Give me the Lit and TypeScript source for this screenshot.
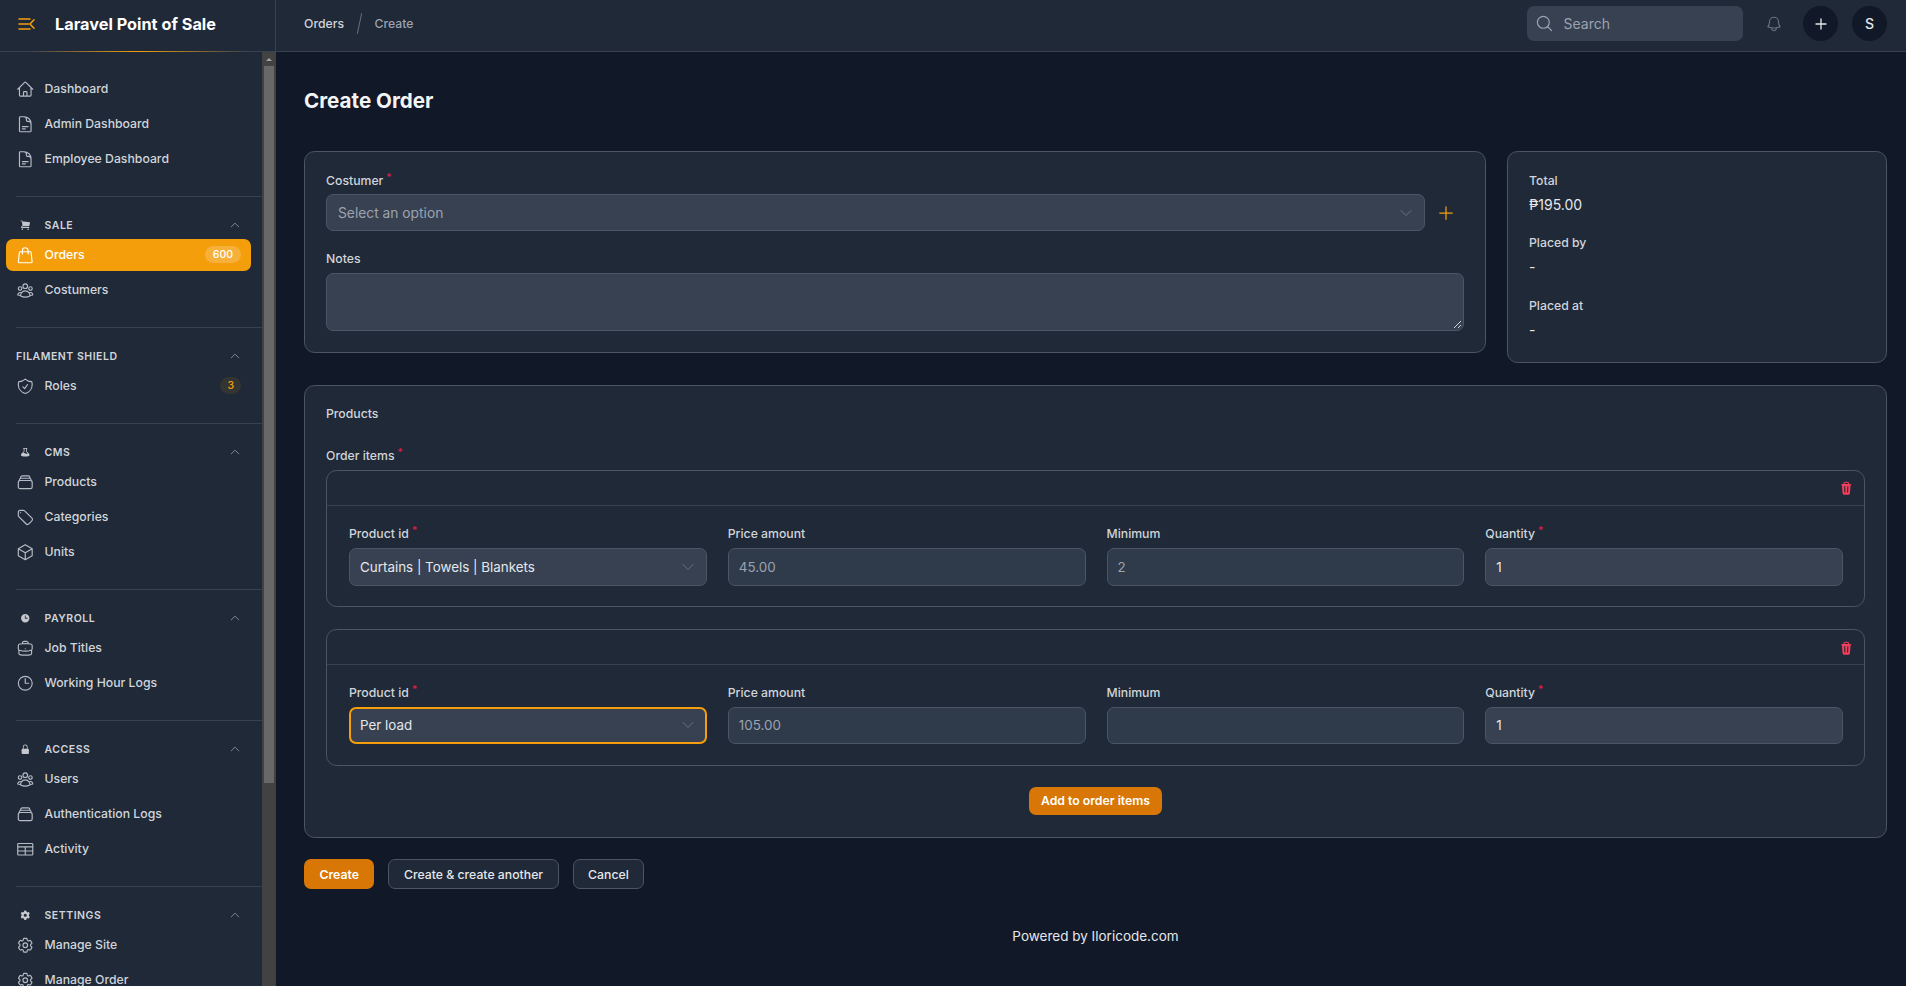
import { LitElement, html, css, svg } from "lit";
import { customElement } from "lit/decorators.js";

const O: Record<string, string> = {
  home: "m2.25 12 8.954-8.955c.44-.439 1.152-.439 1.591 0L21.75 12M4.5 9.75v10.125c0 .621.504 1.125 1.125 1.125H9.75v-4.875c0-.621.504-1.125 1.125-1.125h2.25c.621 0 1.125.504 1.125 1.125V21h4.125c.621 0 1.125-.504 1.125-1.125V9.75M8.25 21h8.25",
  doc: "M19.5 14.25v-2.625a3.375 3.375 0 0 0-3.375-3.375h-1.5A1.125 1.125 0 0 1 13.5 7.125v-1.5a3.375 3.375 0 0 0-3.375-3.375H8.25m0 12.75h7.5m-7.5 3H12M10.5 2.25H5.625c-.621 0-1.125.504-1.125 1.125v17.25c0 .621.504 1.125 1.125 1.125h12.75c.621 0 1.125-.504 1.125-1.125V11.25a9 9 0 0 0-9-9Z",
  bag: "M15.75 10.5V6a3.75 3.75 0 1 0-7.5 0v4.5m11.356-1.993 1.263 12c.07.665-.45 1.243-1.119 1.243H4.25a1.125 1.125 0 0 1-1.12-1.243l1.264-12A1.125 1.125 0 0 1 5.513 7.5h12.974c.576 0 1.059.435 1.119 1.007Z",
  group: "M18 18.72a9.094 9.094 0 0 0 3.741-.479 3 3 0 0 0-4.682-2.72m.94 3.198.001.031c0 .225-.012.447-.037.666A11.944 11.944 0 0 1 12 21c-2.17 0-4.207-.576-5.963-1.584A6.062 6.062 0 0 1 6 18.719m12 0a5.971 5.971 0 0 0-.941-3.197m0 0A5.995 5.995 0 0 0 12 12.75a5.995 5.995 0 0 0-5.058 2.772m0 0a3 3 0 0 0-4.681 2.72 8.986 8.986 0 0 0 3.74.477m.94-3.197a5.971 5.971 0 0 0-.94 3.197M15 6.75a3 3 0 1 1-6 0 3 3 0 0 1 6 0Zm6 3a2.25 2.25 0 1 1-4.5 0 2.25 2.25 0 0 1 4.5 0Zm-13.5 0a2.25 2.25 0 1 1-4.5 0 2.25 2.25 0 0 1 4.5 0Z",
  shield: "M9 12.75 11.25 15 15 9.75m-3-7.036A11.959 11.959 0 0 1 3.598 6 11.99 11.99 0 0 0 3 9.749c0 5.592 3.824 10.29 9 11.623 5.176-1.332 9-6.03 9-11.622 0-1.31-.21-2.571-.598-3.751h-.152c-3.196 0-6.1-1.248-8.25-3.285Z",
  stack: "M6 6.878V6a2.25 2.25 0 0 1 2.25-2.25h7.5A2.25 2.25 0 0 1 18 6v.878m-12 0c.235-.083.487-.128.75-.128h10.5c.263 0 .515.045.75.128m-12 0A2.25 2.25 0 0 0 4.5 9v.878m13.5-3A2.25 2.25 0 0 1 19.5 9v.878m0 0a2.246 2.246 0 0 0-.75-.128H5.25c-.263 0-.515.045-.75.128m15 0A2.25 2.25 0 0 1 21 12v6a2.25 2.25 0 0 1-2.25 2.25H5.25A2.25 2.25 0 0 1 3 18v-6c0-.98.626-1.813 1.5-2.122",
  tag: "M9.568 3H5.25A2.25 2.25 0 0 0 3 5.25v4.318c0 .597.237 1.17.659 1.591l9.581 9.581c.699.699 1.78.872 2.607.33a18.095 18.095 0 0 0 5.223-5.223c.542-.827.369-1.908-.33-2.607L11.16 3.66A2.25 2.25 0 0 0 9.568 3Z M6 6h.008v.008H6V6Z",
  cube: "m21 7.5-9-5.25L3 7.5m18 0-9 5.25m9-5.25v9l-9 5.25M3 7.5l9 5.25M3 7.5v9l9 5.25m0-9v9",
  brief: "M20.25 14.15v4.25c0 1.094-.787 2.036-1.872 2.18-2.087.277-4.216.42-6.378.42s-4.291-.143-6.378-.42c-1.085-.144-1.872-1.086-1.872-2.18v-4.25m16.5 0a2.18 2.18 0 0 0 .75-1.661V8.706c0-1.081-.768-2.015-1.837-2.175a48.114 48.114 0 0 0-3.413-.387m4.5 8.006c-.194.165-.42.295-.673.38A23.978 23.978 0 0 1 12 15.75c-2.648 0-5.195-.429-7.577-1.22a2.016 2.016 0 0 1-.673-.38m0 0A2.18 2.18 0 0 1 3 12.489V8.706c0-1.081.768-2.015 1.837-2.175a48.111 48.111 0 0 1 3.413-.387m7.5 0V5.25A2.25 2.25 0 0 0 13.5 3h-3a2.25 2.25 0 0 0-2.25 2.25v.894m7.5 0a48.667 48.667 0 0 0-7.5 0M12 12.75h.008v.008H12v-.008Z",
  clock: "M12 6v6h4.5m4.5 0a9 9 0 1 1-18 0 9 9 0 0 1 18 0Z",
  table: "M3.375 4.5h17.25c.621 0 1.125.504 1.125 1.125v12.75c0 .621-.504 1.125-1.125 1.125H3.375a1.125 1.125 0 0 1-1.125-1.125V5.625c0-.621.504-1.125 1.125-1.125ZM2.25 9h19.5M2.25 14.25h19.5M12 9v10.5",
  cog: "M9.594 3.94c.09-.542.56-.94 1.11-.94h2.593c.55 0 1.02.398 1.11.94l.213 1.281c.063.374.313.686.645.87.074.04.147.083.22.127.325.196.72.257 1.075.124l1.217-.456a1.125 1.125 0 0 1 1.37.49l1.296 2.247a1.125 1.125 0 0 1-.26 1.431l-1.003.827c-.293.241-.438.613-.43.992a7.723 7.723 0 0 1 0 .255c-.008.378.137.75.43.991l1.004.827c.424.35.534.955.26 1.43l-1.298 2.247a1.125 1.125 0 0 1-1.369.491l-1.217-.456c-.355-.133-.75-.072-1.076.124a6.47 6.47 0 0 1-.22.128c-.331.183-.581.495-.644.869l-.213 1.281c-.09.543-.56.94-1.11.94h-2.594c-.55 0-1.019-.398-1.11-.94l-.213-1.281c-.062-.374-.312-.686-.644-.87a6.52 6.52 0 0 1-.22-.127c-.325-.196-.72-.257-1.076-.124l-1.217.456a1.125 1.125 0 0 1-1.369-.49l-1.297-2.247a1.125 1.125 0 0 1 .26-1.431l1.004-.827c.292-.24.437-.613.43-.991a6.932 6.932 0 0 1 0-.255c.007-.38-.138-.751-.43-.992l-1.004-.827a1.125 1.125 0 0 1-.26-1.43l1.297-2.247a1.125 1.125 0 0 1 1.37-.491l1.216.456c.356.133.751.072 1.076-.124.072-.044.146-.086.22-.128.332-.183.582-.495.644-.869l.214-1.28Z M15 12a3 3 0 1 1-6 0 3 3 0 0 1 6 0Z",
  chevUp: "m4.5 15.75 7.5-7.5 7.5 7.5",
  chevDown: "m19.5 8.25-7.5 7.5-7.5-7.5",
  bell: "M14.857 17.082a23.848 23.848 0 0 0 5.454-1.31A8.967 8.967 0 0 1 18 9.75V9A6 6 0 0 0 6 9v.75a8.967 8.967 0 0 1-2.312 6.022c1.733.64 3.56 1.085 5.455 1.31m5.714 0a24.255 24.255 0 0 1-5.714 0m5.714 0a3 3 0 1 1-5.714 0",
  search: "m21 21-5.197-5.197m0 0A7.5 7.5 0 1 0 5.196 5.196a7.5 7.5 0 0 0 10.607 10.607Z",
  plus: "M12 4.5v15m7.5-7.5h-15",
};
const S: Record<string, string> = {
  cart: "M1 1.75A.75.75 0 0 1 1.75 1h1.628a1.75 1.75 0 0 1 1.734 1.51L5.18 3a65.25 65.25 0 0 1 13.36 1.412.75.75 0 0 1 .58.875 48.645 48.645 0 0 1-1.618 6.2.75.75 0 0 1-.712.513H6a2.503 2.503 0 0 0-2.292 1.5H17.25a.75.75 0 0 1 0 1.5H2.76a.75.75 0 0 1-.748-.807 4.002 4.002 0 0 1 2.716-3.486L3.626 2.716a.25.25 0 0 0-.248-.216H1.75A.75.75 0 0 1 1 1.75ZM6 17.5a1.5 1.5 0 1 1-3 0 1.5 1.5 0 0 1 3 0ZM15.5 19a1.5 1.5 0 1 0 0-3 1.5 1.5 0 0 0 0 3Z",
  beaker: "M8.5 3.528v4.644c0 .729-.29 1.428-.805 1.944l-1.217 1.216a8.75 8.75 0 0 1 3.55.621l.502.201a7.25 7.25 0 0 0 4.178.365l-2.403-2.403a2.75 2.75 0 0 1-.805-1.944V3.528a40.205 40.205 0 0 0-3 0Zm4.5.084.19.015a.75.75 0 1 0 .12-1.495 41.364 41.364 0 0 0-6.62 0 .75.75 0 0 0 .12 1.495L7 3.612v4.56c0 .331-.132.649-.366.883L2.6 13.09c-1.496 1.496-.817 4.15 1.403 4.475C5.961 17.852 7.963 18 10 18s4.039-.148 5.997-.436c2.22-.325 2.9-2.979 1.403-4.475l-4.034-4.034A1.25 1.25 0 0 1 13 8.172v-4.56Z",
  clock: "M10 18a8 8 0 1 0 0-16 8 8 0 0 0 0 16Zm.75-13a.75.75 0 0 0-1.5 0v5c0 .414.336.75.75.75h4a.75.75 0 0 0 0-1.5h-3.25V5Z",
  lock: "M10 1a4.5 4.5 0 0 0-4.5 4.5V9H5a2 2 0 0 0-2 2v6a2 2 0 0 0 2 2h10a2 2 0 0 0 2-2v-6a2 2 0 0 0-2-2h-.5V5.5A4.5 4.5 0 0 0 10 1Zm3 8V5.5a3 3 0 1 0-6 0V9h6Z",
  cog: "M7.84 1.804A1 1 0 0 1 8.82 1h2.36a1 1 0 0 1 .98.804l.331 1.652a6.993 6.993 0 0 1 1.929 1.115l1.598-.54a1 1 0 0 1 1.186.447l1.18 2.044a1 1 0 0 1-.205 1.251l-1.267 1.113a7.047 7.047 0 0 1 0 2.228l1.267 1.113a1 1 0 0 1 .206 1.25l-1.18 2.045a1 1 0 0 1-1.187.447l-1.598-.54a6.993 6.993 0 0 1-1.929 1.115l-.33 1.652a1 1 0 0 1-.98.804H8.82a1 1 0 0 1-.98-.804l-.331-1.652a6.993 6.993 0 0 1-1.929-1.115l-1.598.54a1 1 0 0 1-1.186-.447l-1.18-2.044a1 1 0 0 1 .205-1.251l1.267-1.114a7.05 7.05 0 0 1 0-2.227L1.821 7.773a1 1 0 0 1-.206-1.25l1.18-2.045a1 1 0 0 1 1.187-.447l1.598.54A6.992 6.992 0 0 1 7.51 3.456l.33-1.652ZM10 13a3 3 0 1 0 0-6 3 3 0 0 0 0 6Z",
  trash: "M8.75 1A2.75 2.75 0 0 0 6 3.75v.443c-.795.077-1.584.176-2.365.298a.75.75 0 1 0 .23 1.482l.149-.022.841 10.518A2.75 2.75 0 0 0 7.596 19h4.807a2.75 2.75 0 0 0 2.742-2.53l.841-10.52.149.023a.75.75 0 0 0 .23-1.482A41.03 41.03 0 0 0 14 4.193V3.75A2.75 2.75 0 0 0 11.25 1h-2.5ZM10 4c.84 0 1.673.025 2.5.075V3.75c0-.69-.56-1.25-1.25-1.25h-2.5c-.69 0-1.25.56-1.25 1.25v.325C8.327 4.025 9.16 4 10 4ZM8.58 7.72a.75.75 0 0 0-1.5.06l.3 7.5a.75.75 0 1 0 1.5-.06l-.3-7.5Zm4.34.06a.75.75 0 1 0-1.5-.06l-.3 7.5a.75.75 0 1 0 1.5.06l.3-7.5Z",
};

const oi = (n: string, cls = "ic") => html`<svg class=${cls} viewBox="0 0 24 24" fill="none" stroke="currentColor" stroke-width="1.5" stroke-linecap="round" stroke-linejoin="round">${svg`<path d=${O[n]}></path>`}</svg>`;
const si = (n: string, cls = "gi") => html`<svg class=${cls} viewBox="0 0 20 20" fill="currentColor">${svg`<path fill-rule="evenodd" clip-rule="evenodd" d=${S[n]}></path>`}</svg>`;

type Item = { i: string; t: string; active?: boolean; badge?: string };
type Group = { label?: string; gi?: string; items: Item[] };
const groups: Group[] = [
  { items: [{ i: "home", t: "Dashboard" }, { i: "doc", t: "Admin Dashboard" }, { i: "doc", t: "Employee Dashboard" }] },
  { label: "Sale", gi: "cart", items: [{ i: "bag", t: "Orders", active: true, badge: "600" }, { i: "group", t: "Costumers" }] },
  { label: "Filament Shield", items: [{ i: "shield", t: "Roles", badge: "3" }] },
  { label: "CMS", gi: "beaker", items: [{ i: "stack", t: "Products" }, { i: "tag", t: "Categories" }, { i: "cube", t: "Units" }] },
  { label: "Payroll", gi: "clock", items: [{ i: "brief", t: "Job Titles" }, { i: "clock", t: "Working Hour Logs" }] },
  { label: "Access", gi: "lock", items: [{ i: "group", t: "Users" }, { i: "stack", t: "Authentication Logs" }, { i: "table", t: "Activity" }] },
  { label: "Settings", gi: "cog", items: [{ i: "cog", t: "Manage Site" }, { i: "cog", t: "Manage Order" }] },
];

@customElement("app-root")
export class AppRoot extends LitElement {
  static styles = css`
    :host { display: block; height: 986px; overflow: hidden; background: #111827; color: #e5e7eb; font-family: "Inter", "Liberation Sans", sans-serif; font-size: 12.25px; }
    * { box-sizing: border-box; }
    .app { display: grid; grid-template-columns: 276px 1fr; height: 986px; }
    .side { display: flex; flex-direction: column; min-height: 0; background: #1f2937; border-right: 1px solid #374151; height: 986px; }
    .brand { height: 52px; flex: none; display: flex; align-items: center; padding: 0 0 5px 18px; position: relative; }
    .brand::after { content: ""; position: absolute; left: 0; right: 0; bottom: 0; height: 1px; background: linear-gradient(90deg, #374151 10%, #f59e0b 50%, #374151 90%); }
    .logo { width: 17px; height: 12px; color: #f59e0b; margin-right: 20px; flex: none; }
    .brand-name { font-size: 16.3px; font-weight: 700; color: #fff; }
    .side-body { flex: 1; display: flex; min-height: 0; }
    nav { flex: 1; min-width: 0; overflow: hidden; padding-top: 21px; }
    .bar { flex: none; width: 13px; background: #424242; display: flex; flex-direction: column; }
    .bar-up { height: 14px; display: flex; align-items: center; justify-content: center; }
    .bar-up i { display: block; width: 0; height: 0; border-left: 3.5px solid transparent; border-right: 3.5px solid transparent; border-bottom: 3.5px solid #a3a3a3; }
    .thumb { height: 717px; margin: 0 1px 0 2px; background: #686868; }
    .rule { height: 1px; background: #374151; margin: 21px 0 21.5px 16px; }
    .gl { height: 14px; margin: 0 21px 7px 19.75px; display: flex; align-items: center; color: #d1d5db; font-size: 10.5px; font-weight: 600; letter-spacing: .05em; text-transform: uppercase; }
    .gl.plain { margin-left: 16px; }
    .gi { width: 10.5px; height: 10.5px; margin-right: 14.25px; color: #c4c8ce; flex: none; }
    .gl span { flex: 1; }
    .gl .chev { width: 12px; height: 12px; color: #9ca3af; }
    .items { display: flex; flex-direction: column; gap: 3.5px; }
    .it { height: 31.5px; margin: 0 11px 0 6px; padding: 0 10px 0 9.75px; border-radius: 7px; display: flex; align-items: center; gap: 10.25px; color: #d1d5db; font-weight: 500; }
    .ic { width: 18.5px; height: 18.5px; flex: none; color: #b6bcc6; }
    .it span { flex: 1; }
    .it.on { background: #f59e0b; color: #fff; }
    .it.on .ic { color: #fff; }
    .b { flex: none !important; height: 17px; padding: 0 7px; border-radius: 9px; display: flex; align-items: center; font-size: 10.5px; font-weight: 500; background: rgba(245,158,11,.1); color: #f59e0b; }
    .it.on .b { background: rgba(255,255,255,.2); color: #fff; padding: 0 8px; }
    .main { min-width: 0; display: flex; flex-direction: column; }
    .top { height: 52px; flex: none; background: #1f2937; border-bottom: 1px solid #374151; display: flex; align-items: center; padding: 0 19px 4px 28px; }
    .crumb { color: #d1d5db; font-weight: 500; }
    .crumb.dim { color: #9ca3af; }
    .sl { width: 1px; height: 21px; background: #6b7280; transform: rotate(12deg); margin: 0 14.5px 0 15px; }
    .sp { flex: 1; }
    .search { width: 216px; height: 35px; border-radius: 7px; background: #374151; display: flex; align-items: center; padding-left: 8px; gap: 9.5px; color: #9ca3af; font-size: 14px; }
    .search svg { width: 19px; height: 19px; color: #9ca3af; }
    .bell { width: 18px; height: 18px; color: #6b7280; margin: 0 19.7px 0 22.3px; }
    .circle { width: 35px; height: 35px; border-radius: 50%; background: #111827; color: #e5e7eb; display: flex; align-items: center; justify-content: center; font-size: 14px; font-weight: 500; }
    .circle + .circle { margin-left: 14px; }
    .circle svg { width: 16px; height: 16px; stroke-width: 2; }
    .page { flex: 1; padding: 0 19px 0 28px; }
    h1 { margin: 0; height: 99px; padding-bottom: 2px; display: flex; align-items: center; font-size: 20.6px; font-weight: 700; color: #f3f4f6; }
    .row { display: grid; grid-template-columns: 1182px 380px; gap: 21px; align-items: start; }
    .card { background: #1f2937; border: 1px solid #4b5563; border-radius: 10.5px; padding: 19.5px 21px 21px; }
    .lb { display: block; height: 17.5px; line-height: 17.5px; color: #d1d5db; font-weight: 500; }
    .req { display: inline-block; height: 0; line-height: 0; color: #e11d48; font-size: 10px; margin-left: 3px; transform: translateY(-4px); }
    .field { height: 37px; margin-top: 5.25px; border: 1px solid #4b5563; background: #374151; border-radius: 7px; display: flex; align-items: center; padding: 0 10px; font-size: 13.4px; color: #e5e7eb; }
    .first .field { height: 38px; }
    .field span { flex: 1; }
    .field svg { width: 16px; height: 16px; color: #6b7280; }
    .field.ph { color: #9ca3af; font-size: 13.8px; padding-left: 11px; }
    .field.off { background: #2f3a4a; color: #9ca3af; }
    .field.focus { border: 2px solid #f59e0b; padding: 0 9px; }
    .cust { display: flex; align-items: center; margin-top: 5.25px; }
    .cust .field { flex: 1; margin-top: 0; }
    .plusbtn { width: 20px; height: 20px; color: #f59e0b; margin: 0 8px 0 11.5px; flex: none; }
    .area { height: 58px; margin-top: 5.25px; border: 1px solid #4b5563; background: #374151; border-radius: 7px; position: relative; }
    .grip { position: absolute; right: 2px; bottom: 2px; width: 8px; height: 8px; color: #d1d5db; }
    .mt { margin-top: 19px; }
    .val { margin-top: 4.5px; font-size: 14px; color: #e5e7eb; line-height: 21px; }
    .val + .lb { margin-top: 19.75px; }
    .total { padding-bottom: 21.5px; }
    .prod { margin-top: 22px; padding-bottom: 22px; }
    .ptitle { height: 17.5px; line-height: 17.5px; font-weight: 500; color: #d1d5db; }
    .oi { margin-top: 24.25px; }
    .rep { margin-top: 5.25px; border: 1px solid #4b5563; border-radius: 10.5px; }
    .rep + .rep { margin-top: 22px; }
    .rep + .rep .rb { padding-top: 18.5px; padding-bottom: 21.5px; }
    .rh { height: 35px; padding: 1px 11px 0 0; border-bottom: 1px solid #374151; display: flex; align-items: center; justify-content: flex-end; color: #f43f5e; }
    .rh svg { width: 14.5px; height: 14.5px; }
    .rb { padding: 19.5px 21px 20.5px 22px; display: grid; grid-template-columns: repeat(4, 1fr); gap: 21px; }
    .addrow { display: flex; justify-content: center; margin-top: 20.5px; }
    .btn { height: 28.7px; padding: 0 12px; border-radius: 7px; display: inline-flex; align-items: center; font-weight: 600; color: #fff; background: #d97706; }
    .btn.sec { background: #1f2937; border: 1px solid #4b5563; color: #e5e7eb; font-weight: 500; }
    .acts { display: flex; gap: 14px; margin-top: 20.5px; }
    .acts .btn { height: 30.7px; padding: 0 15.5px; }
    .acts .btn.sec { padding: 0 14.5px; }
    .foot { margin-top: 38.5px; text-align: center; font-size: 13.5px; line-height: 17.5px; color: #e5e7eb; }
  `;

  private field(label: string, req: boolean, val: string, kind: string) {
    return html`<div>
      <label class="lb">${label}${req ? html`<span class="req">*</span>` : ""}</label>
      <div class="field ${kind}"><span>${val}</span>${kind.includes("sel") ? oi("chevDown") : ""}</div>
    </div>`;
  }

  private repeater(name: string, price: string, min: string, qty: string, focus: boolean) {
    return html`<div class="rep ${focus ? "" : "first"}">
      <div class="rh">${si("trash", "")}</div>
      <div class="rb">
        ${this.field("Product id", true, name, focus ? "sel focus" : "sel")}
        ${this.field("Price amount", false, price, "off")}
        ${this.field("Minimum", false, min, "off")}
        ${this.field("Quantity", true, qty, "")}
      </div>
    </div>`;
  }

  render() {
    return html`<div class="app">
      <aside class="side">
        <div class="brand">
          <svg class="logo" viewBox="0 0 17 12" fill="none" stroke="currentColor" stroke-width="1.6" stroke-linecap="round" stroke-linejoin="round">
            <path d="M1 1h11M1 6h9.5M1 11h11M16 1.8 12 6l4 4.2"></path>
          </svg>
          <div class="brand-name">Laravel Point of Sale</div>
        </div>
        <div class="side-body">
          <nav>
            ${groups.map((g, idx) => html`
              ${idx > 0 ? html`<div class="rule"></div>` : ""}
              ${g.label ? html`<div class="gl ${g.gi ? "" : "plain"}">
                ${g.gi ? si(g.gi) : ""}<span>${g.label}</span>${oi("chevUp", "chev")}
              </div>` : ""}
              <div class="items">
                ${g.items.map((it) => html`<div class="it ${it.active ? "on" : ""}">
                  ${oi(it.i)}<span>${it.t}</span>${it.badge ? html`<div class="b">${it.badge}</div>` : ""}
                </div>`)}
              </div>`)}
          </nav>
          <div class="bar"><div class="bar-up"><i></i></div><div class="thumb"></div></div>
        </div>
      </aside>
      <div class="main">
        <header class="top">
          <span class="crumb">Orders</span><span class="sl"></span><span class="crumb dim">Create</span>
          <span class="sp"></span>
          <div class="search">${oi("search", "")}<span>Search</span></div>
          ${oi("bell", "bell")}
          <div class="circle">${oi("plus", "")}</div>
          <div class="circle">S</div>
        </header>
        <main class="page">
          <h1>Create Order</h1>
          <div class="row">
            <section class="card">
              <label class="lb">Costumer<span class="req">*</span></label>
              <div class="cust">
                <div class="field ph"><span>Select an option</span>${oi("chevDown")}</div>
                ${oi("plus", "plusbtn")}
              </div>
              <label class="lb mt">Notes</label>
              <div class="area">
                <svg class="grip" viewBox="0 0 8 8" stroke="currentColor" fill="none"><path d="M1 8 8 1M5 8l3-3"></path></svg>
              </div>
            </section>
            <section class="card total">
              <label class="lb">Total</label><div class="val">₱195.00</div>
              <label class="lb">Placed by</label><div class="val">-</div>
              <label class="lb">Placed at</label><div class="val">-</div>
            </section>
          </div>
          <section class="card prod">
            <div class="ptitle">Products</div>
            <label class="lb oi">Order items<span class="req">*</span></label>
            ${this.repeater("Curtains | Towels | Blankets", "45.00", "2", "1", false)}
            ${this.repeater("Per load", "105.00", "", "1", true)}
            <div class="addrow"><div class="btn">Add to order items</div></div>
          </section>
          <div class="acts">
            <div class="btn">Create</div>
            <div class="btn sec">Create &amp; create another</div>
            <div class="btn sec">Cancel</div>
          </div>
          <div class="foot">Powered by Iloricode.com</div>
        </main>
      </div>
    </div>`;
  }
}
